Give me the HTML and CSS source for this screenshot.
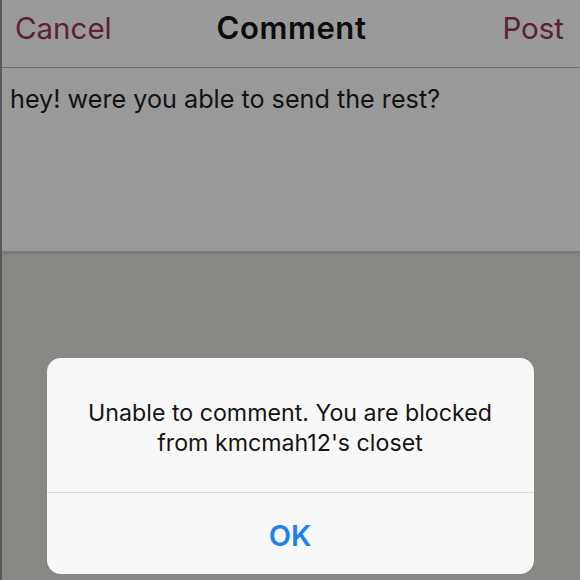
FILE: index.html
```html
<!DOCTYPE html>
<html>
<head>
<meta charset="utf-8">
<link rel="stylesheet" href="styles.css">
</head>
<body>
<div class="screen">
  <header class="nav">
    <span class="nav-btn nav-left">Cancel</span>
    <span class="nav-title">Comment</span>
    <span class="nav-btn nav-right">Post</span>
  </header>
  <div class="compose">hey! were you able to send the rest?</div>
  <div class="backdrop">
    <div class="alert">
      <div class="alert-msg">Unable to comment. You are blocked<br>from kmcmah12's closet</div>
      <div class="alert-action">OK</div>
    </div>
  </div>
</div>
</body>
</html>
```

FILE: styles.css
```css
html, body {
  margin: 0;
  padding: 0;
}
body {
  font-family: "Inter", "Liberation Sans", sans-serif;
}
.screen {
  width: 580px;
  height: 580px;
  display: flex;
  flex-direction: column;
  background: #8a8885;
  overflow: hidden;
  border-left: 2px solid #5a5a5a;
  box-sizing: border-box;
}
.nav {
  height: 68px;
  display: grid;
  grid-template-columns: 1fr auto 1fr;
  align-items: center;
  padding: 0 16px 0 13px;
  background: #9a9a9a;
  border-bottom: 1px solid #6c6c6c;
  flex: none;
  box-sizing: border-box;
}
.nav-btn {
  font-size: 29.5px;
  color: #5c2231;
  padding-bottom: 12px;
}
.nav-left {
  justify-self: start;
}
.nav-right {
  justify-self: end;
}
.nav-title {
  font-size: 31px;
  font-weight: 600;
  color: #0c0c0c;
  padding-bottom: 12px;
  margin-left: 4px;
  letter-spacing: 0.6px;
}
.compose {
  height: 184px;
  background: #999999;
  padding: 16px 8px 0 8px;
  box-sizing: border-box;
  font-size: 25.2px;
  color: #121212;
  border-bottom: 1px solid #7a7a7a;
  box-shadow: 0 2px 2px rgba(0,0,0,0.12);
  flex: none;
}
.backdrop {
  flex: 1;
  display: flex;
  justify-content: center;
  padding-top: 106px;
  padding-right: 2px;
}
.alert {
  width: 487px;
  height: 216px;
  background: #f8f8f8;
  border-radius: 14px;
  display: flex;
  flex-direction: column;
}
.alert-msg {
  height: 135px;
  box-sizing: border-box;
  padding-top: 40px;
  text-align: center;
  font-size: 23.2px;
  line-height: 30px;
  color: #141414;
  border-bottom: 1px solid #dadada;
}
.alert-action {
  flex: 1;
  display: flex;
  align-items: center;
  justify-content: center;
  font-size: 29px;
  font-weight: 600;
  color: #1f82e6;
  padding-top: 4px;
}
```
